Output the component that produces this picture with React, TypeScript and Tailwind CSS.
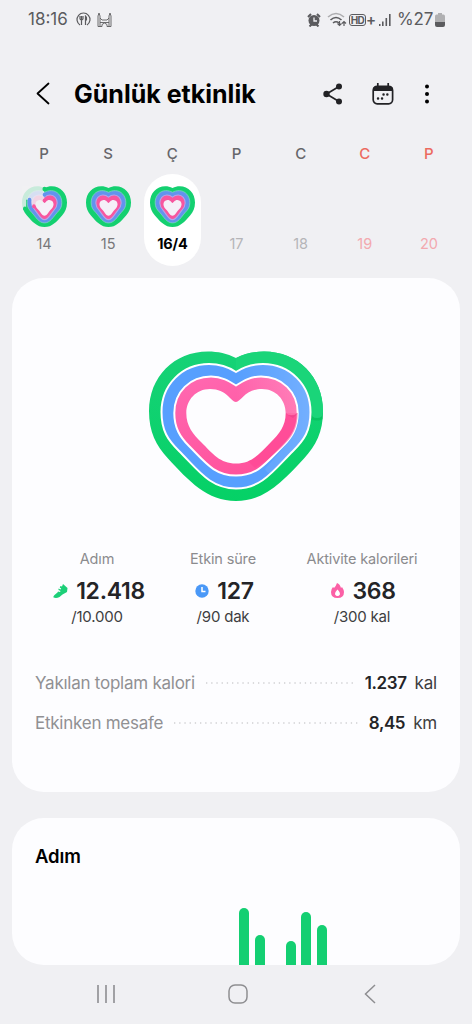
import React, { useId } from 'react';

type Point = [number, number];

// Left half of each ring edge, from the notch down to the tip, x relative to the centre line
const EDGES: Point[][] = [
  [[0, 7], [-9, 2.5], [-18, 0.5], [-28, 0.5], [-62, 0.5], [-87, 26], [-87, 60], [-87, 81], [-80, 94.5], [-68, 107.5], [-47, 130], [-29, 150], [0, 150]],
  [[0, 21], [-9, 15], [-17, 13], [-27, 13], [-54, 13], [-74.5, 34], [-74.5, 61], [-74.5, 80], [-68, 89], [-57, 100], [-38, 119], [-26, 137.5], [0, 137.5]],
  [[0, 34.5], [-7, 30], [-14, 25.5], [-25, 25.5], [-46, 25.5], [-61.7, 41], [-61.7, 62], [-61.7, 77], [-56, 86], [-47, 95], [-31, 111], [-22, 124.5], [0, 124.5]],
  [[0, 51], [-5, 51], [-9, 38], [-26, 38], [-40, 38], [-49.7, 49], [-49.7, 62], [-49.7, 75], [-43, 83], [-35, 91], [-23, 103], [-16, 112.5], [0, 112.5]],
];

// Same rings for the week strip, where the bands are thicker
const SMALL_EDGES: Point[][] = [
  EDGES[0],
  [[0, 23], [-9, 19], [-15, 17], [-26, 17], [-49, 17], [-67, 36], [-67, 61], [-67, 78], [-60, 86], [-50, 96], [-33, 114], [-22, 135], [0, 135]],
  [[0, 41], [-7, 35], [-13, 33], [-22, 33], [-38, 33], [-49, 47], [-49, 62], [-49, 76], [-42, 83], [-36, 89], [-22, 104], [-16, 123], [0, 123]],
  [[0, 62], [-5, 60], [-8, 51], [-19, 51], [-29, 51], [-35, 59], [-35, 67], [-35, 77], [-28, 83], [-22, 89], [-13, 99], [-9, 109], [0, 109]],
];

const toPath = (half: Point[]) => {
  const mirrored = half.slice(0, -1).reverse().map(([x, y]): Point => [-x, y]);
  const all = [...half, ...mirrored].map(([x, y]) => `${x + 87} ${y}`);
  return `M${all[0]}C${all.slice(1).join(' ')}Z`;
};

const largeRings = EDGES.map(toPath);
const smallRings = SMALL_EDGES.map(toPath);

const Heart: React.FC<{ className: string }> = ({ className }) => {
  const id = useId();
  const [outer, middle, inner, hole] = largeRings;

  return (
    <svg className={className} viewBox="0 0 174 150">
      <defs>
        <clipPath id={`${id}o`}><path d={outer} /></clipPath>
        <clipPath id={`${id}m`}><path d={middle} /></clipPath>
        <clipPath id={`${id}i`}><path d={inner} /></clipPath>
        <linearGradient id={`${id}g`} x1="0" y1="0" x2="0" y2="1">
          <stop offset="0" stopColor="#17d277" />
          <stop offset="1" stopColor="#05d166" />
        </linearGradient>
        <linearGradient id={`${id}p`} x1="0" y1="0" x2="0.5" y2="1">
          <stop offset="0" stopColor="#ff69b1" />
          <stop offset="1" stopColor="#ff539d" />
        </linearGradient>
        <linearGradient id={`${id}w`} x1="0" y1="0" x2="1" y2="0">
          <stop offset="0" stopColor="#fff" stopOpacity="0" />
          <stop offset="1" stopColor="#fff" stopOpacity="0.2" />
        </linearGradient>
      </defs>
      <path d={outer} fill={`url(#${id}g)`} />
      <g clipPath={`url(#${id}o)`}>
        <ellipse cx="168" cy="65" rx="8" ry="4.500" fill="#00b552" opacity="0.5" />
        <path d="M87 0h87v61q0 6-6 6t-6-6H87z" fill="#1ad579" />
      </g>
      <path d={middle} fill="#579ffe" stroke="#fff" strokeWidth="2" />
      <g clipPath={`url(#${id}m)`}>
        <path d="M87 0h87v90l-46 31q-9 4-12-3L136 95 87 60z" fill={`url(#${id}w)`} />
      </g>
      <path d={inner} fill={`url(#${id}p)`} stroke="#fff" strokeWidth="2" />
      <g clipPath={`url(#${id}i)`}>
        <path d="M135 62h18c-2 22-25 40-47 55l-9-9c19-16 38-31 38-46z" fill="#ff4693" opacity="0.6" />
        <path d="M135 62q8 5 14 0l-5 5z" fill="#d93a83" opacity="0.4" />
        <path d="M87 20h62v38q0 6-6.500 6t-6.500-6H87z" fill={`url(#${id}w)`} />
      </g>
      <path d={hole} fill="#fdfdff" />
    </svg>
  );
};

const SmallHeart: React.FC<{ partial?: boolean }> = ({ partial }) => {
  const [outer, middle, inner, hole] = smallRings;

  return (
    <svg className="h-[41px] w-[45px]" viewBox="0 0 174 150" preserveAspectRatio="none">
      <path d={outer} fill="#14d070" />
      <path d={middle} fill="#6293ee" stroke="#7fd3c4" strokeWidth="3" />
      <path d={inner} fill="#f7569f" stroke="#b5a4ea" strokeWidth="4" />
      <path d={hole} fill="#f5f0f8" />
      {partial && (
        <>
          <path d="M86-3V60L64 74H38L36 50H16V80L-6 86V-3z" fill="#f0f0f3" opacity="0.82" />
          <circle cx="87" cy="11" r="8" fill="#14d070" />
          <circle cx="11" cy="82" r="7" fill="#14d070" />
          <circle cx="87" cy="32" r="7" fill="#6293ee" />
          <circle cx="29" cy="50" r="7" fill="#6293ee" />
          <circle cx="87" cy="53" r="7" fill="#f7569f" />
          <circle cx="46" cy="74" r="7" fill="#f7569f" />
        </>
      )}
    </svg>
  );
};

const StatusBar: React.FC = () => (
  <div className="flex h-10 items-center justify-between pl-7 pr-[27px] pt-px text-[17px] text-[#5b5b5e]">
    <div className="flex items-center">
      <span className="w-[42px] whitespace-nowrap">18:16</span>
      <svg className="ml-[6px] h-[15px] w-[15px]" viewBox="0 0 15 15" fill="none" stroke="currentColor" strokeWidth="1.200">
        <path d="M4 13A6.500 6.500 0 1 1 11 13M5.500 4v9M4 4v3q1.500 2 3 0V4" />
        <path d="M9.500 13V4Q11 5 10.500 8h-1" fill="currentColor" />
      </svg>
      <svg className="ml-[6px] h-4 w-[15px]" viewBox="0 0 15 16" fill="none" stroke="currentColor" strokeWidth="0.9">
        <path d="M1 14.500V4l1-3 1 3v10.500M12 14.500V4l1-3 1 3v10.500M3 6l2 2h5l2-2M3 10.500h9M1 14.500h4v-2q2.500-3 5 0v2h4" />
      </svg>
    </div>
    <div className="flex items-center">
      <svg className="h-[14px] w-[14px]" viewBox="0 0 14 14">
        <circle cx="7" cy="7.500" r="5.500" fill="currentColor" />
        <path d="M1 4l3-3M13 4l-3-3M2.500 13.500l2-2M11.500 13.500l-2-2" stroke="currentColor" strokeWidth="2" />
        <path d="M7 4.500V8h3" stroke="#f0f0f3" strokeWidth="1.300" fill="none" />
      </svg>
      <svg className="ml-[6px] h-[15px] w-5" viewBox="0 0 20 15" fill="none" stroke="currentColor" strokeWidth="1.600">
        <path d="M1 5q8-7 16 0" opacity="0.45" />
        <path d="M3.500 8q5.500-5 11 0M6 11q3-2.500 6 0" />
        <path d="M12.500 9v4.500m-2-2 2 2 2-2M17 14V9.500m-2 2 2-2 2 2" strokeWidth="1.200" />
      </svg>
      <span className="ml-[2px] flex h-3 w-[17px] items-center justify-center rounded-[3px] border border-current text-[10px] font-bold leading-none tracking-[-0.500px]">
        HD
      </span>
      <span className="w-[10px] text-[15px] font-semibold leading-none">+</span>
      <svg className="ml-[3px] h-[14px] w-3" viewBox="0 0 12 14" fill="currentColor">
        <path d="M0 11h1.500v2H0zM3 8.500h1.600V13H3zM6.500 5h1.600v8H6.500zM10 1h1.600v12H10z" />
      </svg>
      <span className="ml-[6px] w-[36px] whitespace-nowrap tracking-[-0.200px]">%27</span>
      <svg className="ml-[2px] h-[14px] w-[10px]" viewBox="0 0 10 14">
        <path d="M3 0h4v1.500h1.500q1.500 0 1.500 2V9H0V3.500q0-2 1.500-2H3z" fill="#b0b0b2" />
        <path d="M0 9h10v3q0 2-2 2H2q-2 0-2-2z" fill="#5b5b5e" />
      </svg>
    </div>
  </div>
);

const Header: React.FC = () => (
  <header className="mt-[27px] flex h-[60px] items-center pl-9 pr-[42px] text-black">
    <svg className="h-[23px] w-[14px]" viewBox="0 0 14 23" fill="none" stroke="currentColor" strokeWidth="1.800" strokeLinecap="round" strokeLinejoin="round">
      <path d="M12.500 1.500 1.500 11.500l11 10" />
    </svg>
    <h1 className="ml-6 w-[200px] whitespace-nowrap pt-[2px] text-[25px] font-bold">Günlük etkinlik</h1>
    <div className="ml-auto flex items-center text-[#222225]">
      <svg className="h-[22px] w-5" viewBox="0 0 20 22">
        <path d="M16 3.500 3.500 11 16 18.500" fill="none" stroke="currentColor" strokeWidth="1.700" />
        <circle cx="16" cy="3.500" r="3" fill="currentColor" />
        <circle cx="3.500" cy="11" r="3.200" fill="currentColor" />
        <circle cx="16" cy="18.500" r="3" fill="currentColor" />
      </svg>
      <svg className="ml-[29px] h-[22px] w-[22px]" viewBox="0 0 22 22">
        <rect x="1.200" y="3.400" width="19.400" height="17.400" rx="4" fill="none" stroke="currentColor" strokeWidth="1.700" />
        <path d="M1 8V6q0-3 4-3h12q4 0 4 3v2z" fill="currentColor" />
        <path d="M5.800 0v4M16.200 0v4" stroke="currentColor" strokeWidth="1.700" />
        <path d="M6 15.500h.1M10 15.500h.1M11.500 11.500h.1M15.300 11.500h.1" stroke="currentColor" strokeWidth="2.400" strokeLinecap="round" />
      </svg>
      <svg className="ml-[30px] h-5 w-[6px] text-black" viewBox="0 0 6 20" fill="currentColor">
        <circle cx="3" cy="2.500" r="2" />
        <circle cx="3" cy="10" r="2" />
        <circle cx="3" cy="17.500" r="2" />
      </svg>
    </div>
  </header>
);

const days = [
  { letter: 'P', date: '14', heart: true, partial: true, letterColor: 'text-[#66666a]', dateColor: 'text-[#77777a]' },
  { letter: 'S', date: '15', heart: true, letterColor: 'text-[#66666a]', dateColor: 'text-[#77777a]' },
  { letter: 'Ç', date: '16/4', heart: true, selected: true, letterColor: 'text-[#66666a]', dateColor: 'text-black' },
  { letter: 'P', date: '17', letterColor: 'text-[#66666a]', dateColor: 'text-[#b5b5b8]' },
  { letter: 'C', date: '18', letterColor: 'text-[#66666a]', dateColor: 'text-[#b5b5b8]' },
  { letter: 'C', date: '19', letterColor: 'text-[#ec6a60]', dateColor: 'text-[#f3a9af]' },
  { letter: 'P', date: '20', letterColor: 'text-[#ec6a60]', dateColor: 'text-[#f3a9af]' },
];

const WeekStrip: React.FC = () => (
  <div className="grid grid-cols-7 pl-3 pr-[11px] pt-[21px]">
    {days.map((day) => (
      <div key={day.date} className="flex flex-col items-center">
        <span className={`h-5 text-[15px] font-medium leading-5 ${day.letterColor}`}>{day.letter}</span>
        <div className={`mt-[10px] flex h-[92px] w-[57px] flex-col items-center rounded-full pt-3 ${day.selected ? 'bg-white' : ''}`}>
          <div className="h-[41px]">{day.heart && <SmallHeart partial={day.partial} />}</div>
          <span className={`mt-[7px] text-[14.500px] leading-5 ${day.selected ? 'font-bold tracking-[-0.200px]' : ''} ${day.dateColor}`}>
            {day.date}
          </span>
        </div>
      </div>
    ))}
  </div>
);

interface StatProps {
  label: string;
  value: string;
  goal: string;
  icon: React.ReactNode;
}

const Stat: React.FC<StatProps> = ({ label, value, goal, icon }) => (
  <div className="flex flex-col items-center whitespace-nowrap">
    <span className="h-5 text-[14.500px] leading-5 tracking-[-0.150px] text-[#8b8b8e]">{label}</span>
    <div className="mt-[7px] flex h-[30px] items-center gap-2 pl-[3px]">
      {icon}
      <span className="text-[23px] font-semibold leading-[30px] tracking-[-0.300px] text-[#242427]">{value}</span>
    </div>
    <span className="mt-px h-5 text-[15px] leading-5 tracking-[-0.200px] text-[#3e3e41]">{goal}</span>
  </div>
);

const DetailRow: React.FC<{ label: string; value: string; unit: string }> = ({ label, value, unit }) => (
  <div className="flex h-6 items-center whitespace-nowrap text-[17px] leading-6">
    <span className="tracking-[-0.250px] text-[#909093]">{label}</span>
    <svg className="ml-[11px] mr-[9px] h-[2px] flex-1" aria-hidden="true">
      <path d="M0 1h400" stroke="#cfcfd2" strokeWidth="1.300" strokeDasharray="1.300 3.900" />
    </svg>
    <span className="font-semibold tracking-[-0.400px] text-[#242427]">{value}</span>
    <span className="ml-2 tracking-[-0.200px] text-[#3e3e41]">{unit}</span>
  </div>
);

// Bar heights of the visible hours; 0 is an hour without steps
const stepBars = [57, 30, 0, 24, 53, 40];

const App: React.FC = () => {
  return (
    <div className="flex h-[1024px] w-[472px] flex-col overflow-hidden bg-[#f0f0f3] font-['Inter','Liberation_Sans',sans-serif]">
      <StatusBar />
      <Header />
      <WeekStrip />

      <main className="flex flex-col px-3 pt-3">
        <section className="h-[514px] rounded-[32px] bg-[#fdfdff] px-[23px] pt-[73px]">
          <Heart className="mx-auto h-[150px] w-[174px]" />
          <div className="mt-12 grid grid-cols-[124px_128px_150px]">
            <Stat
              label="Adım"
              value="12.418"
              goal="/10.000"
              icon={
                <svg className="h-4 w-4" viewBox="0 0 16 16" fill="#1ccf78">
                  <path d="M11 1l4.500 4-.5 4-4.500 2.500-3 2.500q-3 1.500-6 .5-.5-1.500 1-2.500l3-2.500.5-1 2 .5.5-1-2-1V5.500l2 1 .7-1-1.500-1 .8-1.500 1.500.5z" />
                </svg>
              }
            />
            <Stat
              label="Etkin süre"
              value="127"
              goal="/90 dak"
              icon={
                <svg className="h-[14px] w-[14px]" viewBox="0 0 14 14">
                  <circle cx="7" cy="7" r="6.700" fill="#4a98f7" />
                  <path d="M7 3v4.500h3.500" fill="none" stroke="#fff" strokeWidth="1.500" />
                </svg>
              }
            />
            <Stat
              label="Aktivite kalorileri"
              value="368"
              goal="/300 kal"
              icon={
                <svg className="h-[15px] w-[13px]" viewBox="0 0 13 15">
                  <path d="M6 0q3 1 4 5l1-1q2 3 2 5 0 6-6.500 6T0 9q0-3 2-5l1 1Q5 3 6 0z" fill="#fb60a6" />
                  <path d="M6.500 6.500q3 3 2.300 5Q8.200 13 6.500 13t-2.300-1.500Q3.500 9.500 6.500 6.500z" fill="#fff" />
                </svg>
              }
            />
          </div>
          <div className="mt-11 flex flex-col gap-4">
            <DetailRow label="Yakılan toplam kalori" value="1.237" unit="kal" />
            <DetailRow label="Etkinken mesafe" value="8,45" unit="km" />
          </div>
        </section>

        <section className="mt-[26px] flex h-[147px] flex-col justify-between rounded-[32px] bg-[#fdfdff] pl-[23px] pt-[26px]">
          <h2 className="text-[18.500px] font-semibold leading-6 tracking-[-0.100px] text-black">Adım</h2>
          <div className="flex items-end gap-[5.600px] pl-[204px]">
            {stepBars.map((height, i) => (
              <div key={i} className="w-[10px] rounded-t-full bg-[#14cf72]" style={{ height }} />
            ))}
          </div>
        </section>
      </main>

      <nav className="grid h-[62px] grid-cols-[20px_20px_12px] items-center gap-x-[112px] pl-24 text-[#8e8e91]">
        <svg className="h-5 w-5" viewBox="0 0 20 20" stroke="currentColor" strokeWidth="1.600">
          <path d="M2 1v18M10 1v18M18 1v18" />
        </svg>
        <svg className="h-5 w-5" viewBox="0 0 20 20" fill="none" stroke="currentColor" strokeWidth="1.500">
          <rect x="1" y="1" width="18" height="18" rx="6" />
        </svg>
        <svg className="ml-1 h-5 w-3" viewBox="0 0 12 20" fill="none" stroke="currentColor" strokeWidth="1.500">
          <path d="M11 1 1.500 10l9.500 9" />
        </svg>
      </nav>
    </div>
  );
};

export default App;
